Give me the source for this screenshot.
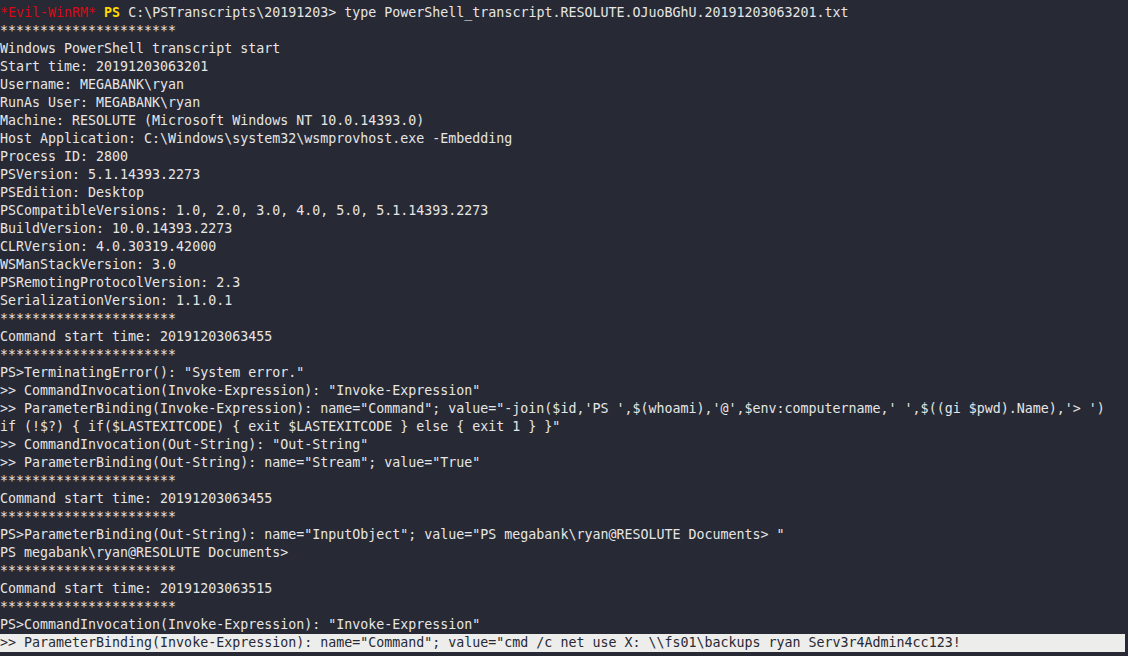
const STARS = "**********************";

const lines: string[] = [
  STARS,
  "Windows PowerShell transcript start",
  "Start time: 20191203063201",
  "Username: MEGABANK\\ryan",
  "RunAs User: MEGABANK\\ryan",
  "Machine: RESOLUTE (Microsoft Windows NT 10.0.14393.0)",
  "Host Application: C:\\Windows\\system32\\wsmprovhost.exe -Embedding",
  "Process ID: 2800",
  "PSVersion: 5.1.14393.2273",
  "PSEdition: Desktop",
  "PSCompatibleVersions: 1.0, 2.0, 3.0, 4.0, 5.0, 5.1.14393.2273",
  "BuildVersion: 10.0.14393.2273",
  "CLRVersion: 4.0.30319.42000",
  "WSManStackVersion: 3.0",
  "PSRemotingProtocolVersion: 2.3",
  "SerializationVersion: 1.1.0.1",
  STARS,
  "Command start time: 20191203063455",
  STARS,
  'PS>TerminatingError(): "System error."',
  '>> CommandInvocation(Invoke-Expression): "Invoke-Expression"',
  ">> ParameterBinding(Invoke-Expression): name=\"Command\"; value=\"-join($id,'PS ',$(whoami),'@',$env:computername,' ',$((gi $pwd).Name),'> ')",
  'if (!$?) { if($LASTEXITCODE) { exit $LASTEXITCODE } else { exit 1 } }"',
  '>> CommandInvocation(Out-String): "Out-String"',
  '>> ParameterBinding(Out-String): name="Stream"; value="True"',
  STARS,
  "Command start time: 20191203063455",
  STARS,
  'PS>ParameterBinding(Out-String): name="InputObject"; value="PS megabank\\ryan@RESOLUTE Documents> "',
  "PS megabank\\ryan@RESOLUTE Documents>",
  STARS,
  "Command start time: 20191203063515",
  STARS,
  'PS>CommandInvocation(Invoke-Expression): "Invoke-Expression"',
];

export default function App() {
  return (
    <div
      className="w-[1128px] h-[656px] overflow-hidden bg-[#272934] text-[#e6e6e6] pt-[4px] text-[13.3px] leading-[18px] whitespace-pre"
      style={{ fontFamily: '"DejaVu Sans Mono", "Liberation Mono", monospace' }}
    >
      <div>
        <span className="text-[#d70a14]">*Evil-WinRM*</span>{" "}
        <span className="text-[#ffd700] font-bold">PS</span>{" "}
        C:\PSTranscripts\20191203&gt; type PowerShell_transcript.RESOLUTE.OJuoBGhU.20191203063201.txt
      </div>
      {lines.map((l, i) => (
        <div key={i}>{l}</div>
      ))}
      <div className="bg-[#ededeb] text-[#272934] mr-[3px]">
        {'>> ParameterBinding(Invoke-Expression): name="Command"; value="cmd /c net use X: \\\\fs01\\backups ryan Serv3r4Admin4cc123!'}
      </div>
    </div>
  );
}
